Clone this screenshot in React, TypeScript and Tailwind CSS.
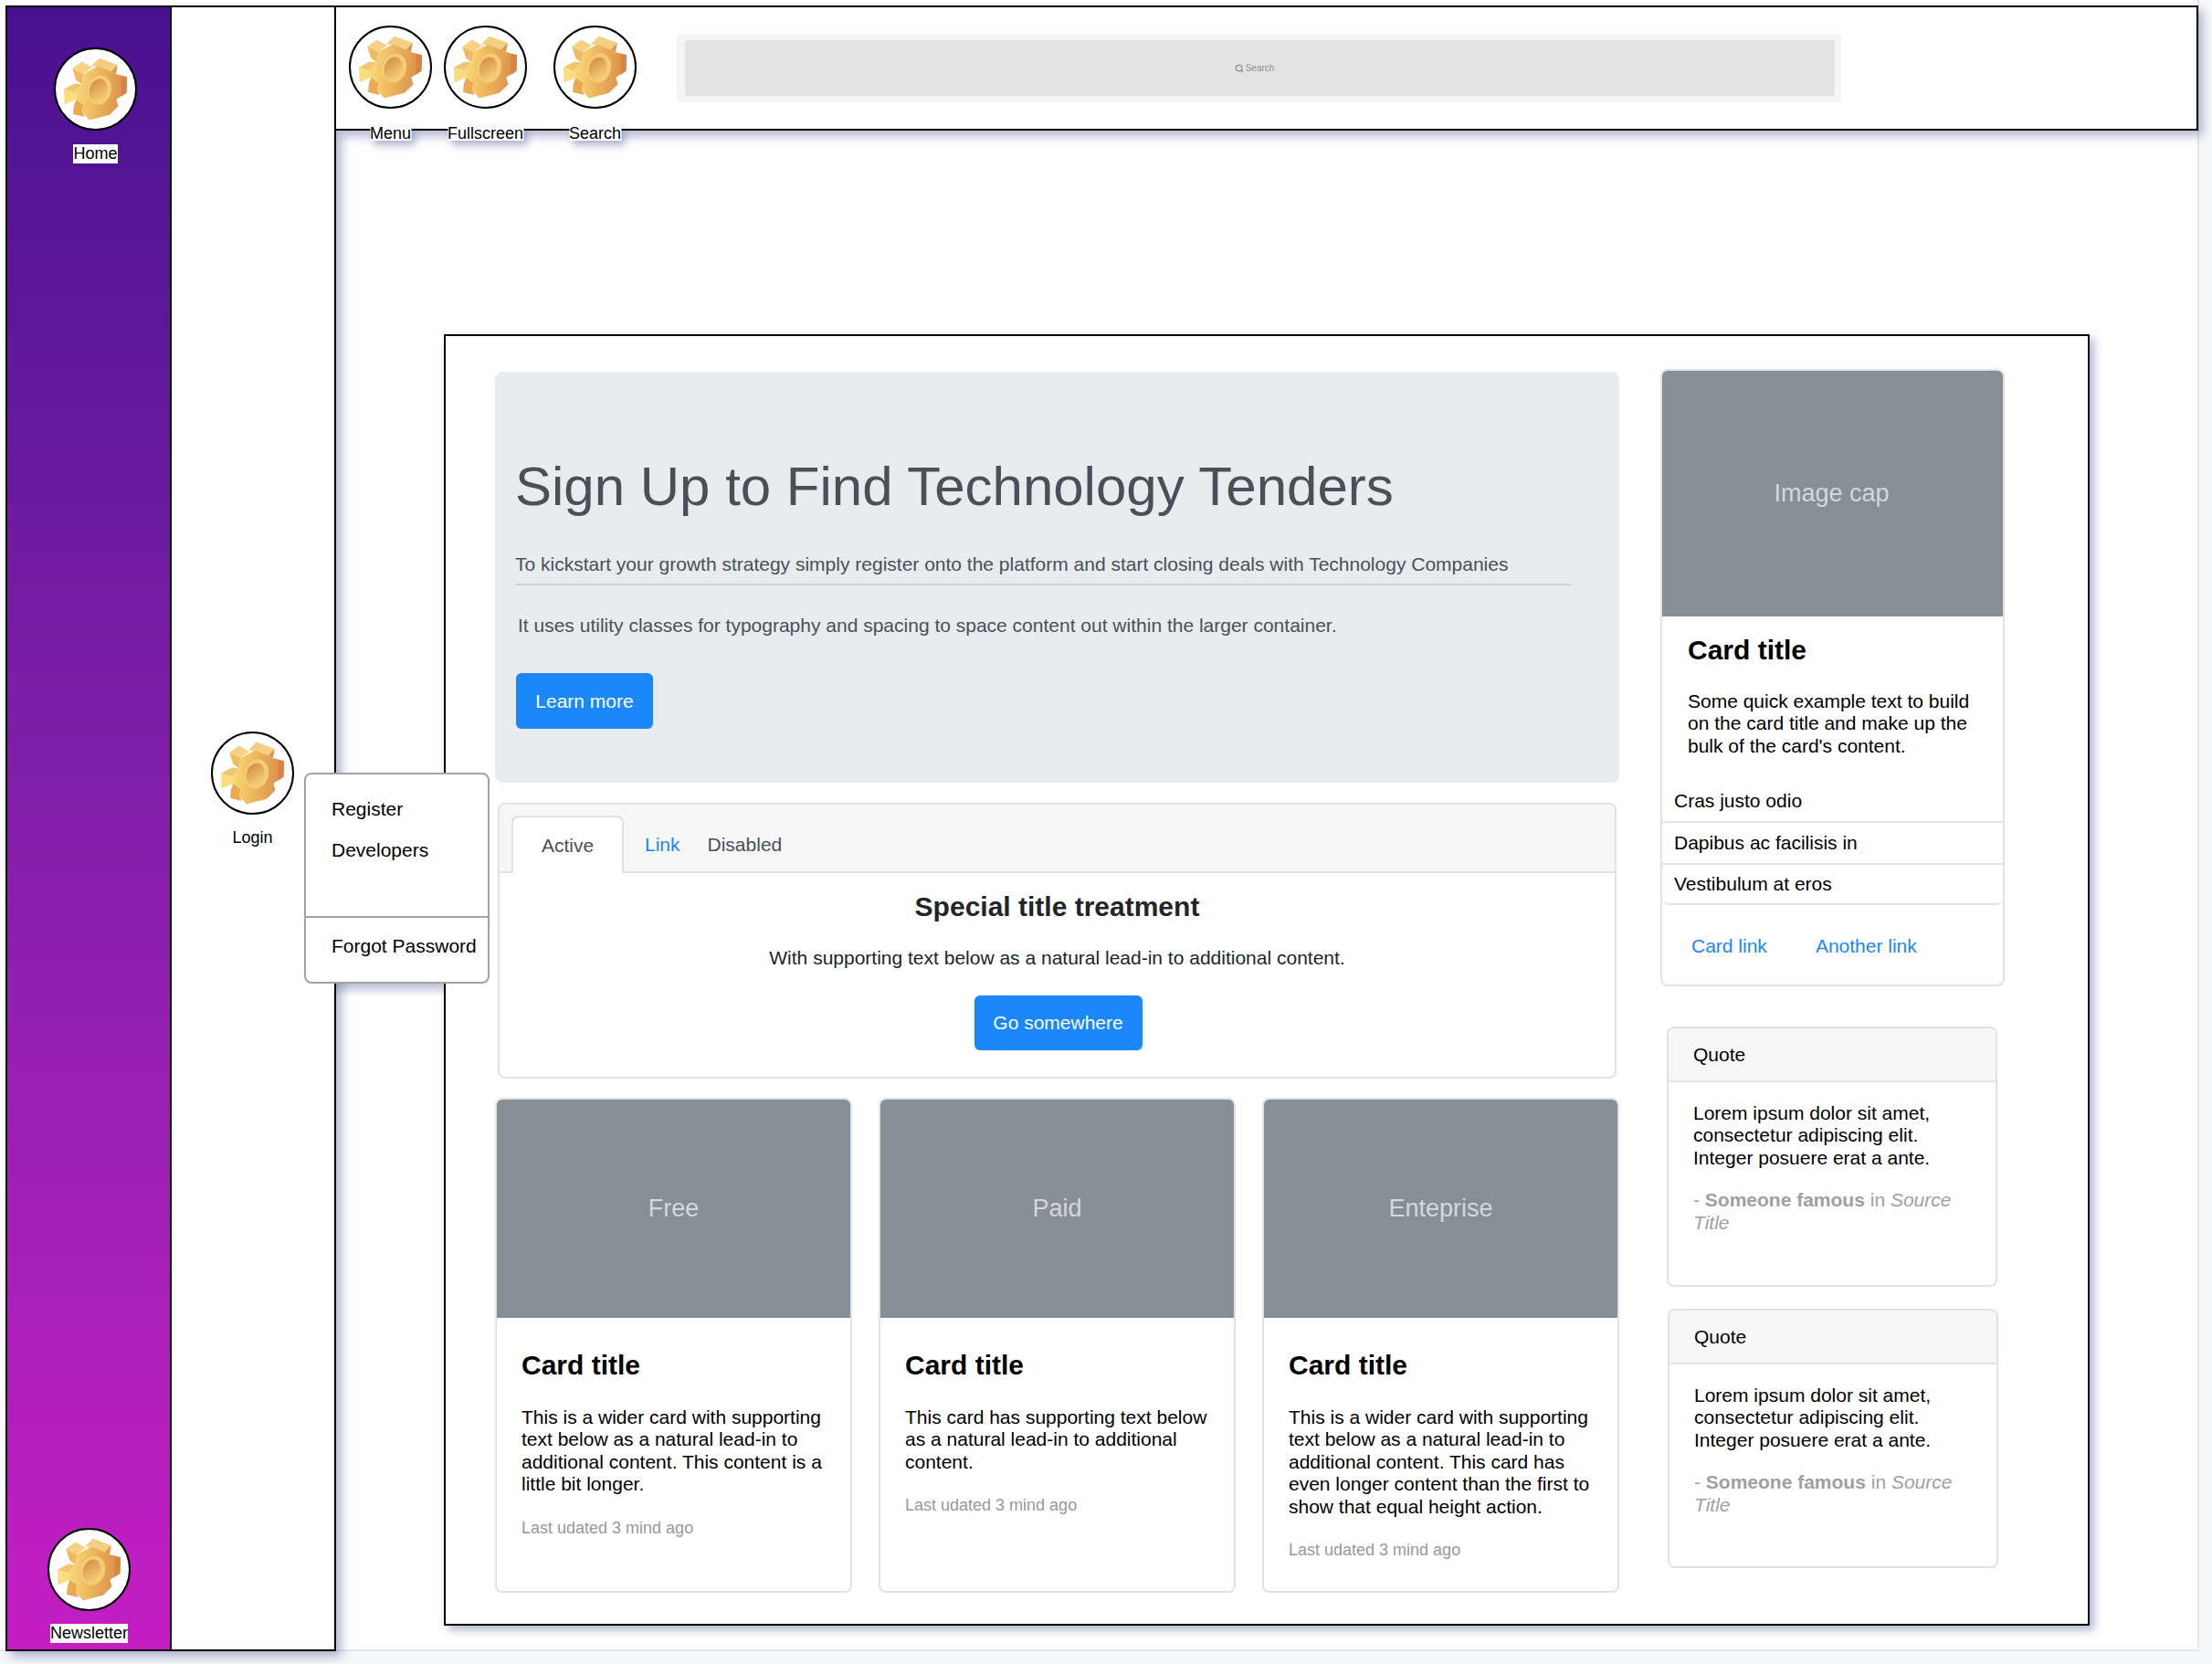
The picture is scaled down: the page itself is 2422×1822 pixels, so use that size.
import { Search } from "lucide-react";

const Gear = () => (
  <svg viewBox="0 0 273 273" className="h-full w-full">
    <defs>
      <linearGradient id="gearFace" x1="0" y1="0.45" x2="1" y2="0.55">
        <stop offset="0" stopColor="#fadb78" />
        <stop offset="0.4" stopColor="#eeb95f" />
        <stop offset="1" stopColor="#d98a47" />
      </linearGradient>
      <linearGradient id="gearHole" x1="0" y1="0" x2="0.9" y2="1">
        <stop offset="0" stopColor="#d08543" />
        <stop offset="1" stopColor="#f9d677" />
      </linearGradient>
    </defs>
    {/* side facets */}
    <polygon points="122,58 150,30 213,53 190,76 145,60" fill="#f3cf83" />
    <polygon points="57,66 90,42 125,62 95,85" fill="#f6d286" />
    <polygon points="57,66 95,85 90,120 70,106" fill="#eebb61" />
    <polygon points="28,137 65,118 90,120 65,150" fill="#f2c670" />
    <polygon points="28,137 65,150 70,172 30,190" fill="#fbdd7d" />
    <polygon points="62,195 70,172 95,190 92,215 100,232 60,223" fill="#eaaa52" />
    {/* front face */}
    <polygon
      points="95,85 145,58 190,76 207,85 245,95 243,150 208,172 215,195 185,225 115,243 92,215 95,190 70,172 65,150 90,120"
      fill="url(#gearFace)"
    />
    <polygon points="245,95 243,150 225,162 225,92" fill="#d58444" />
    <polygon points="213,53 207,85 190,76" fill="#dc984b" />
    {/* hole */}
    <ellipse cx="150" cy="140" rx="41" ry="51" transform="rotate(18 150 140)" fill="#f5cc75" />
    <ellipse cx="146" cy="141" rx="30" ry="40" transform="rotate(18 146 141)" fill="url(#gearHole)" />
  </svg>
);

const GearCircle = () => (
  <div className="h-[91px] w-[91px] shrink-0 rounded-full border-2 border-black bg-white">
    <Gear />
  </div>
);

const HeaderButton = ({ label }: { label: string }) => (
  <div className="relative h-[92px] w-[91px] shrink-0">
    <GearCircle />
    <span className="absolute left-1/2 top-[110px] -translate-x-1/2 whitespace-nowrap bg-white text-[18px] leading-[16px] text-black shadow-[4px_5px_8px_rgba(70,78,140,0.4)]">
      {label}
    </span>
  </div>
);

const PricingCard = ({ cap, text }: { cap: string; text: string }) => (
  <div className="h-[542px] w-[391px] overflow-hidden rounded-lg border-2 border-[#e2e2e2] bg-white">
    <div className="flex h-[239px] items-center justify-center bg-[#868e96] text-[27px] text-[#d4d8dc]">{cap}</div>
    <div className="pl-[27px] pr-[27px] pt-[34px]">
      <h5 className="text-[30px] font-bold leading-[36px] text-black">Card title</h5>
      <p className="mt-[27px] text-[21px] leading-[24.4px] text-black">{text}</p>
      <p className="mt-[23px] text-[18px] leading-[24px] text-[#999999]">Last udated 3 mind ago</p>
    </div>
  </div>
);

const QuoteCard = ({ extra }: { extra: string }) => (
  <div className={`${extra} w-[362px] overflow-hidden rounded-lg border-2 border-[#e2e2e2] bg-white`}>
    <div className="flex h-[59px] items-center border-b-2 border-[#e4e4e4] bg-[#f7f7f7] pl-[27px] text-[21px] text-black">Quote</div>
    <div className="pl-[27px] pr-[27px] pt-[22px] text-[21px] leading-[24.4px]">
      <p className="text-black">Lorem ipsum dolor sit amet, consectetur adipiscing elit. Integer posuere erat a ante.</p>
      <p className="mt-[22px] text-[#a0a0a0]">
        - <b>Someone famous</b> in <i>Source Title</i>
      </p>
    </div>
  </div>
);

export default function App() {
  return (
    <div className="relative h-[1822px] w-[2422px] overflow-hidden bg-[#f7f8fa] font-['Liberation_Sans',Arial,sans-serif]">
      <div className="flex h-[1808px] w-[2408px] border-b-2 border-r-2 border-[#e6e6e6] bg-white pl-[6px] pt-[6px]">
        {/* sidebar */}
        <aside className="relative z-10 flex h-[1802px] w-[362px] shrink-0 border-2 border-black bg-white shadow-[6px_6px_10px_rgba(70,78,140,0.4)]">
          <div className="flex w-[180px] shrink-0 flex-col justify-between border-r-2 border-black bg-gradient-to-b from-[#48108f] to-[#c51cc4]">
            <div className="ml-[51px] mt-[44px] flex w-[91px] flex-col items-center">
              <GearCircle />
              <span className="mt-[15px] bg-white text-[18px] leading-[21px] text-black">Home</span>
            </div>
            <div className="mb-[7px] ml-[44px] flex w-[91px] flex-col items-center">
              <GearCircle />
              <span className="mt-[14px] whitespace-nowrap bg-white text-[18px] leading-[21px] text-black">Newsletter</span>
            </div>
          </div>
          <div className="flex flex-1 flex-col items-center pt-[793px] pr-[1px]">
            <GearCircle />
            <span className="mt-[15px] text-[18px] leading-[21px] text-black">Login</span>
          </div>
        </aside>

        <div className="flex min-w-0 flex-1 flex-col">
          {/* top bar */}
          <header className="relative z-20 flex h-[137px] w-[2039px] items-start border-y-2 border-r-2 border-black bg-white pl-[14px] pt-[20px] shadow-[5px_6px_10px_rgba(70,78,140,0.4)]">
            <HeaderButton label="Menu" />
            <div className="ml-[13px]">
              <HeaderButton label="Fullscreen" />
            </div>
            <div className="ml-[29px]">
              <HeaderButton label="Search" />
            </div>
            <div className="ml-[44px] mt-[9px] flex h-[75px] w-[1275px] items-center bg-[#f5f5f5] pl-[9px]">
              <div className="flex h-[61px] w-[1259px] items-center justify-center rounded bg-[#e3e3e3] pr-[12px] text-[10px] text-[#909090]">
                <Search size={10} strokeWidth={3} />
                <span className="ml-[2px]">Search</span>
              </div>
            </div>
          </header>

          {/* main panel */}
          <main className="ml-[118px] mt-[223px] flex h-[1414px] w-[1802px] items-start border-2 border-black bg-white pl-[54px] pt-[39px] shadow-[5px_5px_9px_rgba(70,78,140,0.4)]">
            <div className="w-[1231px] shrink-0">
              <section className="h-[450px] rounded-lg bg-[#e9ecef] pl-[22px] pt-[91px] text-[#495057]">
                <h1 className="text-[60px] leading-[70px]">Sign Up to Find Technology Tenders</h1>
                <p className="mt-[38px] text-[21px] leading-[24px]">
                  To kickstart your growth strategy simply register onto the platform and start closing deals with Technology Companies
                </p>
                <hr className="mt-[9px] w-[1156px] border-0 border-t-2 border-[#d0d3d8]" />
                <p className="ml-[3px] mt-[32px] text-[21px] leading-[24px]">
                  It uses utility classes for typography and spacing to space content out within the larger container.
                </p>
                <button className="ml-[1px] mt-[40px] h-[61px] w-[150px] rounded-md bg-[#1a88fb] text-[21px] text-white">Learn more</button>
              </section>

              <section className="mx-[3px] mt-[22px] h-[302px] overflow-hidden rounded-lg border-2 border-[#e2e2e2] bg-white">
                <div className="flex h-[75px] items-end border-b-2 border-[#e2e2e2] bg-[#f7f7f7] pl-[13px] text-[21px]">
                  <div className="-mb-[2px] flex h-[63px] w-[123px] items-center justify-center rounded-t-lg border-x-2 border-t-2 border-[#e2e2e2] bg-white text-[#495057]">
                    Active
                  </div>
                  <span className="mb-[17px] ml-[23px] leading-[24px] text-[#1a88fb]">Link</span>
                  <span className="mb-[17px] ml-[30px] leading-[24px] text-[#495057]">Disabled</span>
                </div>
                <div className="flex flex-col items-center pt-[19px]">
                  <h5 className="text-[30px] font-bold leading-[36px] text-[#212529]">Special title treatment</h5>
                  <p className="mt-[26px] text-[21px] leading-[24px] text-[#212529]">With supporting text below as a natural lead-in to additional content.</p>
                  <button className="ml-[2px] mt-[29px] h-[60px] w-[184px] rounded-md bg-[#1a88fb] text-[21px] text-white">Go somewhere</button>
                </div>
              </section>

              <div className="mt-[21px] flex gap-[29px]">
                <PricingCard cap="Free" text="This is a wider card with supporting text below as a natural lead-in to additional content. This content is a little bit longer." />
                <PricingCard cap="Paid" text="This card has supporting text below as a natural lead-in to additional content." />
                <PricingCard cap="Enteprise" text="This is a wider card with supporting text below as a natural lead-in to additional content. This card has even longer content than the first to show that equal height action." />
              </div>
            </div>

            <div className="-mt-[3px] ml-[45px] w-[377px] shrink-0">
              <div className="h-[676px] overflow-hidden rounded-lg border-2 border-[#e2e2e2] bg-white">
                <div className="flex h-[269px] items-center justify-center bg-[#868e96] pb-[1px] pr-[2px] text-[27px] text-[#d4d8dc]">Image cap</div>
                <div className="pl-[28px] pr-[27px] pt-[19px]">
                  <h5 className="text-[30px] font-bold leading-[36px] text-black">Card title</h5>
                  <p className="mt-[26px] text-[21px] leading-[24.4px] text-black">
                    Some quick example text to build on the card title and make up the bulk of the card's content.
                  </p>
                </div>
                <ul className="mt-[26px] text-[21px] text-black">
                  <li className="flex h-[46px] items-center border-b-2 border-[#e4e4e4] pl-[13px]">Cras justo odio</li>
                  <li className="flex h-[46px] items-center border-b-2 border-[#e4e4e4] pl-[13px]">Dapibus ac facilisis in</li>
                  <li className="flex h-[44px] items-center rounded-b-lg border-b-2 border-[#e4e4e4] pl-[13px]">Vestibulum at eros</li>
                </ul>
                <div className="flex gap-[53px] pl-[32px] pt-[33px] text-[21px] leading-[24px] text-[#1a88fb]">
                  <span>Card link</span>
                  <span>Another link</span>
                </div>
              </div>
              <QuoteCard extra="ml-[7px] mt-[44px] h-[285px]" />
              <QuoteCard extra="ml-[8px] mt-[24px] h-[284px]" />
            </div>
          </main>
        </div>
      </div>

      {/* login dropdown */}
      <div className="absolute left-[333px] top-[846px] z-30 h-[231px] w-[203px] rounded-lg border-2 border-[#a3a3a3] bg-white pt-[26px] text-[21px] leading-[24px] text-black">
        <p className="pl-[28px]">Register</p>
        <p className="mt-[21px] pl-[28px]">Developers</p>
        <hr className="mt-[60px] border-0 border-t-2 border-[#a3a3a3]" />
        <p className="mt-[19px] whitespace-nowrap pl-[28px]">Forgot Password</p>
      </div>
      <div className="absolute left-[368px] top-[1077px] z-0 h-[14px] w-[118px] bg-gradient-to-b from-[#bcc0d6] to-transparent" />
    </div>
  );
}
